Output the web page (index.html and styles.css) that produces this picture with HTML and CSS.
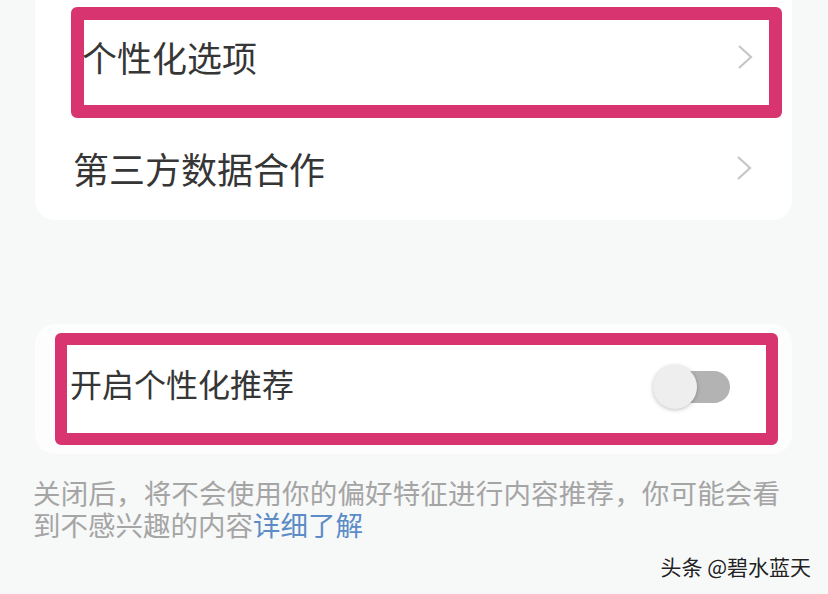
FILE: index.html
```html
<!DOCTYPE html>
<html lang="zh-CN">
<head>
	<meta charset="UTF-8">
	<title>个性化推荐</title>
	<link rel="stylesheet" href="styles.css">
</head>
<body>
<div class="page">
	<div class="card top">
		<div class="row mark">
			<span class="label">个性化选项</span>
			<svg class="arrow" viewBox="0 0 16 26"><path d="M2 2 L14 13 L2 24" /></svg>
		</div>
		<div class="row plain">
			<span class="label wide">第三方数据合作</span>
			<svg class="arrow" viewBox="0 0 16 26"><path d="M2 2 L14 13 L2 24" /></svg>
		</div>
	</div>
	<div class="card switchCard">
		<div class="row mark2">
			<span class="label small">开启个性化推荐</span>
			<div class="toggle">
				<div class="track"></div>
				<div class="knob"></div>
			</div>
		</div>
	</div>
	<p class="note">关闭后，将不会使用你的偏好特征进行内容推荐，你可能会看到不感兴趣的内容<span class="more">详细了解</span></p>
	<div class="stamp">头条 @碧水蓝天</div>
</div>
</body>
</html>
```
FILE: styles.css
```css
*{
	padding: 0;
	margin: 0;
	box-sizing: border-box;
}
body{
	background-color: #f7f8f8;
	font-family: "Noto Sans CJK SC", "Noto Sans", sans-serif;
	width: 828px;
	height: 594px;
	overflow: hidden;
}
.page{
	width: 828px;
}
.card{
	background-color: #fff;
	border-radius: 20px;
	margin-left: 35px;
	margin-right: 36px;
}
.top{
	margin-top: -20px;
	padding-top: 20px;
}
.row{
	display: flex;
	align-items: center;
	justify-content: space-between;
}
.label{
	font-size: 35px;
	line-height: 44px;
	color: #363636;
	white-space: nowrap;
}
.label.wide{
	font-size: 36px;
}
.label.small{
	font-size: 32px;
}
.arrow{
	width: 16px;
	height: 26px;
	fill: none;
	stroke: #c6c6c6;
	stroke-width: 2.2;
}
.mark{
	margin: 7px 10px 0 36px;
	height: 111px;
	border: 13px solid #d83470;
	border-radius: 6px;
	padding: 0 16px 11px 0;
}
.mark .label{
	margin-left: -2px;
}
.plain{
	height: 102px;
	padding: 0 40px 2px 38px;
}
.switchCard{
	margin-top: 104px;
	height: 130px;
	padding: 9px 14px 0 20px;
	background-color: #fdfdfd;
}
.mark2{
	height: 112px;
	border: 12px solid #d83470;
	border-radius: 6px;
	padding: 0 35px 12px 3px;
	background-color: #fff;
}
.toggle{
	width: 78px;
	height: 44px;
	position: relative;
	margin-top: 8px;
}
.track{
	position: absolute;
	left: 9px;
	top: 6px;
	width: 68px;
	height: 32px;
	border-radius: 16px;
	background-color: #b3b3b3;
}
.knob{
	position: absolute;
	left: 0;
	top: 0;
	width: 44px;
	height: 44px;
	border-radius: 50%;
	background-color: #eeeeee;
	box-shadow: 0 1px 4px rgba(0,0,0,0.25);
}
.note{
	margin: 22px 48px 0 33px;
	font-size: 27.5px;
	line-height: 32px;
	color: #a5a5a5;
	text-align: justify;
}
.more{
	color: #5b8cc6;
}
.stamp{
	margin-top: 13px;
	text-align: right;
	padding-right: 17px;
	font-size: 21px;
	line-height: 26px;
	color: #222;
	text-shadow: 0 0 2px #fff, 0 0 2px #fff;
}
```
